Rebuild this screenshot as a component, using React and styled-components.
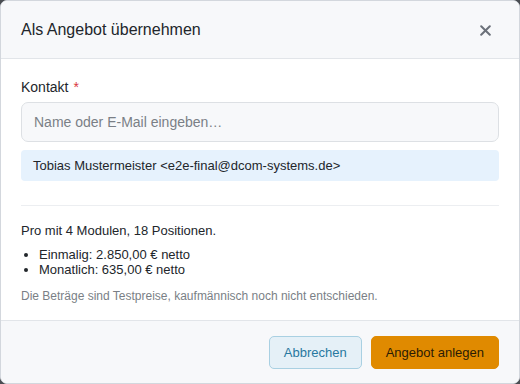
import React from "react";
import styled, { createGlobalStyle } from "styled-components";

const Global = createGlobalStyle`
  html, body { margin: 0; padding: 0; background: #4a4d52; }
  body { font-family: "Liberation Sans", Arial, sans-serif; }
  * { box-sizing: border-box; }
`;

const Dialog = styled.div`
  width: 520px;
  height: 384px;
  background: #fff;
  border: 1px solid #d3d7dd;
  border-radius: 7px;
  overflow: hidden;
  display: flex;
  flex-direction: column;
  color: #22262b;
`;

const Header = styled.div`
  height: 58px;
  flex: none;
  background: #f7f8fa;
  border-bottom: 1px solid #e2e5e9;
  display: flex;
  align-items: center;
  justify-content: space-between;
  padding: 0 24px 0 20px;
`;

const Title = styled.h2`
  margin: 0;
  font-size: 16px;
  font-weight: 400;
  color: #22262b;
`;

const Close = styled.button`
  border: 0;
  background: none;
  padding: 0;
  width: 20px;
  height: 20px;
  display: flex;
  align-items: center;
  justify-content: center;
  cursor: pointer;
  margin-top: 2px;
`;

const Body = styled.div`
  flex: 1;
  padding: 19px 20px 0 20px;
  display: flex;
  flex-direction: column;
`;

const Label = styled.label`
  font-size: 14px;
  color: #22262b;
  line-height: 18px;
  display: block;
  margin-bottom: 6px;
`;

const Star = styled.span`
  color: #d9363e;
  margin-left: 5px;
`;

const Input = styled.input`
  width: 100%;
  height: 40px;
  background: #f7f8fa;
  border: 1px solid #dde0e4;
  border-radius: 7px;
  padding: 0 12px;
  font-family: "Liberation Sans", Arial, sans-serif;
  font-size: 14px;
  color: #22262b;
  outline: none;
  &::placeholder { color: #7a7f86; }
`;

const Suggestion = styled.div`
  margin-top: 8px;
  height: 31px;
  background: #e6f2fd;
  border-radius: 4px;
  display: flex;
  align-items: center;
  padding: 0 12px;
  font-size: 13px;
  color: #22262b;
`;

const Divider = styled.hr`
  border: 0;
  border-top: 1px solid #eceef1;
  margin: 24px 0 0 0;
`;

const Summary = styled.p`
  margin: 16px 0 0 0;
  font-size: 13px;
  line-height: 17px;
`;

const List = styled.ul`
  margin: 8px 0 0 0;
  padding: 0 0 0 18px;
  font-size: 13px;
  line-height: 15px;
`;

const Note = styled.p`
  margin: 11px 0 0 0;
  font-size: 12px;
  color: #7a7f86;
  line-height: 16px;
`;

const Footer = styled.div`
  height: 63px;
  flex: none;
  background: #f7f8fa;
  border-top: 1px solid #e2e5e9;
  display: flex;
  align-items: center;
  justify-content: flex-end;
  gap: 9px;
  padding: 0 20px 0 20px;
`;

const Button = styled.button`
  height: 33px;
  border-radius: 5px;
  font-family: "Liberation Sans", Arial, sans-serif;
  font-size: 13px;
  padding: 0 14px;
  cursor: pointer;
  border: 1px solid ${(p) => (p.$primary ? "#e08a00" : "#a9d0e2")};
  background: ${(p) => (p.$primary ? "#e08a00" : "#e5f0f7")};
  color: ${(p) => (p.$primary ? "#2b1c05" : "#2878a0")};
`;

export default function App() {
  return (
    <>
      <Global />
      <Dialog>
        <Header>
          <Title>Als Angebot übernehmen</Title>
          <Close aria-label="Schließen">
            <svg width="11" height="11" viewBox="0 0 11 11">
              <path d="M1.2 1.2 L9.8 9.8 M9.8 1.2 L1.2 9.8" stroke="#6b7079" strokeWidth="2" strokeLinecap="round" />
            </svg>
          </Close>
        </Header>
        <Body>
          <Label>
            Kontakt<Star>*</Star>
          </Label>
          <Input placeholder="Name oder E-Mail eingeben…" />
          <Suggestion>Tobias Mustermeister &lt;e2e-final@dcom-systems.de&gt;</Suggestion>
          <Divider />
          <Summary>Pro mit 4 Modulen, 18 Positionen.</Summary>
          <List>
            <li>Einmalig: 2.850,00 € netto</li>
            <li>Monatlich: 635,00 € netto</li>
          </List>
          <Note>Die Beträge sind Testpreise, kaufmännisch noch nicht entschieden.</Note>
        </Body>
        <Footer>
          <Button>Abbrechen</Button>
          <Button $primary>Angebot anlegen</Button>
        </Footer>
      </Dialog>
    </>
  );
}
